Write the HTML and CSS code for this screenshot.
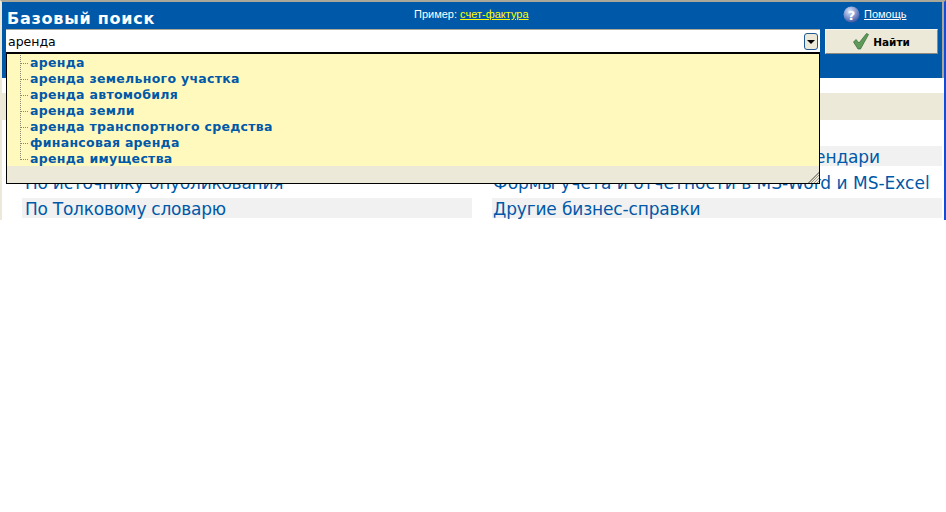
FILE: index.html
```html
<!DOCTYPE html>
<html lang="ru">

<head>
    <meta charset="UTF-8">
    <title>Базовый поиск</title>
    <link rel="stylesheet" href="styles.css">
</head>

<body>
    <div class="frame">
        <div class="search-head">
            <div class="head-top">
                <h1 class="title">Базовый поиск</h1>
                <div class="example">Пример: <a href="#">счет-фактура</a></div>
                <div class="help">
                    <svg width="17" height="17" viewBox="0 0 17 17">
                        <defs>
                            <radialGradient id="ball" cx="40%" cy="30%" r="75%">
                                <stop offset="0" stop-color="#dfe6f6" />
                                <stop offset="0.55" stop-color="#7f96cf" />
                                <stop offset="1" stop-color="#33509f" />
                            </radialGradient>
                        </defs>
                        <circle cx="8.5" cy="8.5" r="8" fill="url(#ball)" />
                        <text x="8.5" y="13.5" text-anchor="middle" class="help-mark">?</text>
                    </svg>
                    <a href="#">Помощь</a>
                </div>
            </div>
            <div class="head-bottom">
                <div class="search-box">
                    <span class="query">аренда</span>
                    <span class="drop-btn"><i></i></span>
                </div>
                <div class="find-btn">
                    <svg width="16" height="17" viewBox="0 0 16 17">
                        <path d="M0.5 9 L3 6.5 L6 10 L13.5 0.5 L15.5 1.5 L7.5 16 L5 16 Z" fill="#5f9a58" stroke="#2f6a35" stroke-width="0.7" />
                    </svg>
                    Найти
                </div>
            </div>
        </div>

        <div class="section-bar"></div>

        <div class="links">
            <div class="link-row grey"></div>
            <div class="link-row grey tight"><a href="#">Налоговые и производственные календари</a></div>
            <div class="link-row"><a href="#">По источнику опубликования</a></div>
            <div class="link-row"><a href="#">Формы учета и отчетности в MS-Word и MS-Excel</a></div>
            <div class="link-row grey"><a href="#">По Толковому словарю</a></div>
            <div class="link-row grey tight"><a href="#">Другие бизнес-справки</a></div>
        </div>

        <!-- подсказки поверх страницы -->
        <div class="suggest">
            <ul class="suggest-list">
                <li>аренда</li>
                <li>аренда земельного участка</li>
                <li>аренда автомобиля</li>
                <li>аренда земли</li>
                <li>аренда транспортного средства</li>
                <li>финансовая аренда</li>
                <li>аренда имущества</li>
            </ul>
            <div class="suggest-foot">
                <span class="grip"></span>
            </div>
        </div>
    </div>
</body>

</html>
```

FILE: styles.css
```css
body {
    margin: 0px;
    padding: 0px;
    background-color: white;
    font-family: "DejaVu Sans", Verdana, sans-serif;
}

a {
    color: #0058a8;
    text-decoration: none;
}

.frame {
    position: relative;
    height: 216px;
    padding-bottom: 2px;
    border-top: 2px solid #aca899;
    border-left: 2px solid #ece9d8;
    border-right: 2px solid #0a4de0;
    overflow: hidden;
}

.search-head {
    height: 76px;
    background-color: #0058a8;
    border-right: 2px solid #aca899;
    padding-left: 4px;
}

.head-top {
    display: flex;
    align-items: center;
    height: 26px;
    padding-top: 1px;
    box-sizing: border-box;
}

.title {
    width: 408px;
    margin: 0px;
    padding-left: 1px;
    padding-top: 6px;
    box-sizing: border-box;
    color: white;
    font-size: 16px;
    font-weight: bold;
    letter-spacing: 0.75px;
}

.example {
    width: 429px;
    color: white;
    font-family: "Liberation Sans", sans-serif;
    font-size: 11px;
    margin-top: -3px;
}

.example a {
    color: yellow;
    text-decoration: underline;
}

.help {
    display: flex;
    align-items: center;
    gap: 4px;
    margin-top: -3px;
    font-family: "Liberation Sans", sans-serif;
    font-size: 11px;
}

.help a {
    color: white;
    text-decoration: underline;
}

.help-mark {
    fill: white;
    font-family: "DejaVu Sans", sans-serif;
    font-size: 13px;
    font-weight: bold;
}

.head-bottom {
    display: flex;
    gap: 5px;
    margin-top: 1px;
}

.search-box {
    display: flex;
    align-items: center;
    justify-content: space-between;
    width: 814px;
    height: 24px;
    padding: 0px 2px;
    box-sizing: border-box;
    background-color: white;
    border-top: 1px solid #aca899;
}

.query {
    font-size: 12.5px;
    color: black;
}

.drop-btn {
    display: flex;
    align-items: center;
    justify-content: center;
    width: 14px;
    height: 17px;
    box-sizing: border-box;
    background-color: #ece9d8;
    border: 1px solid #1f5a96;
    border-radius: 3px;
}

.drop-btn i {
    width: 0px;
    height: 0px;
    border-left: 4px solid transparent;
    border-right: 4px solid transparent;
    border-top: 4px solid black;
}

.find-btn {
    display: flex;
    align-items: center;
    justify-content: center;
    gap: 4px;
    width: 113px;
    height: 25px;
    box-sizing: border-box;
    background-color: #ece9d8;
    border-right: 1px solid #8d8a7c;
    border-bottom: 1px solid #8d8a7c;
    border-top: 1px solid #f7f5ea;
    border-left: 1px solid #f7f5ea;
    color: black;
    font-size: 10.5px;
    font-weight: bold;
}

.section-bar {
    height: 27px;
    margin-top: 15px;
    background-color: #ece9d8;
}

.links {
    display: grid;
    grid-template-columns: 450px 450px;
    column-gap: 20px;
    row-gap: 6px;
    padding-left: 20px;
    margin-top: 26px;
}

.link-row {
    height: 20px;
    line-height: 22px;
    padding-left: 3px;
    font-size: 17px;
    white-space: nowrap;
}

.link-row:nth-child(odd) {
    letter-spacing: -0.25px;
}

.link-row:nth-child(even) {
    padding-left: 1px;
}

.link-row.tight {
    letter-spacing: -0.15px;
}

.link-row.grey {
    background-color: #f1f1f1;
}

.suggest {
    position: absolute;
    top: 50px;
    left: 4px;
    width: 814px;
    height: 132px;
    box-sizing: border-box;
    border: 1px solid black;
    border-top: 2px solid black;
    background-color: #fff9bd;
    display: flex;
    flex-direction: column;
}

.suggest-list {
    height: 112px;
    list-style: none;
    margin: 0px;
    padding: 1px 0px 0px 23px;
    box-sizing: border-box;
    color: #0058a8;
    font-size: 12.5px;
    font-weight: bold;
    letter-spacing: 0.3px;
}

.suggest-list li {
    position: relative;
    height: 16px;
    line-height: 16px;
}

.suggest-list li:last-child {
    height: 15px;
}

/* дерево из точек слева от строк */
.suggest-list li::before {
    content: "";
    position: absolute;
    left: -10px;
    top: -8px;
    width: 7px;
    height: 16px;
    border-left: 1px dotted #8a8a70;
    border-bottom: 1px dotted #8a8a70;
}

.suggest-list li:first-child::before {
    top: 0px;
    height: 8px;
}

.suggest-foot {
    position: relative;
    height: 17px;
    background-color: #ece9d8;
}

.grip {
    position: absolute;
    right: 0px;
    bottom: 0px;
    width: 12px;
    height: 12px;
    background: repeating-linear-gradient(135deg, #ece9d8 0px, #ece9d8 1px, #9a978a 1px, #9a978a 2px);
    clip-path: polygon(100% 0, 100% 100%, 0 100%);
}
```
